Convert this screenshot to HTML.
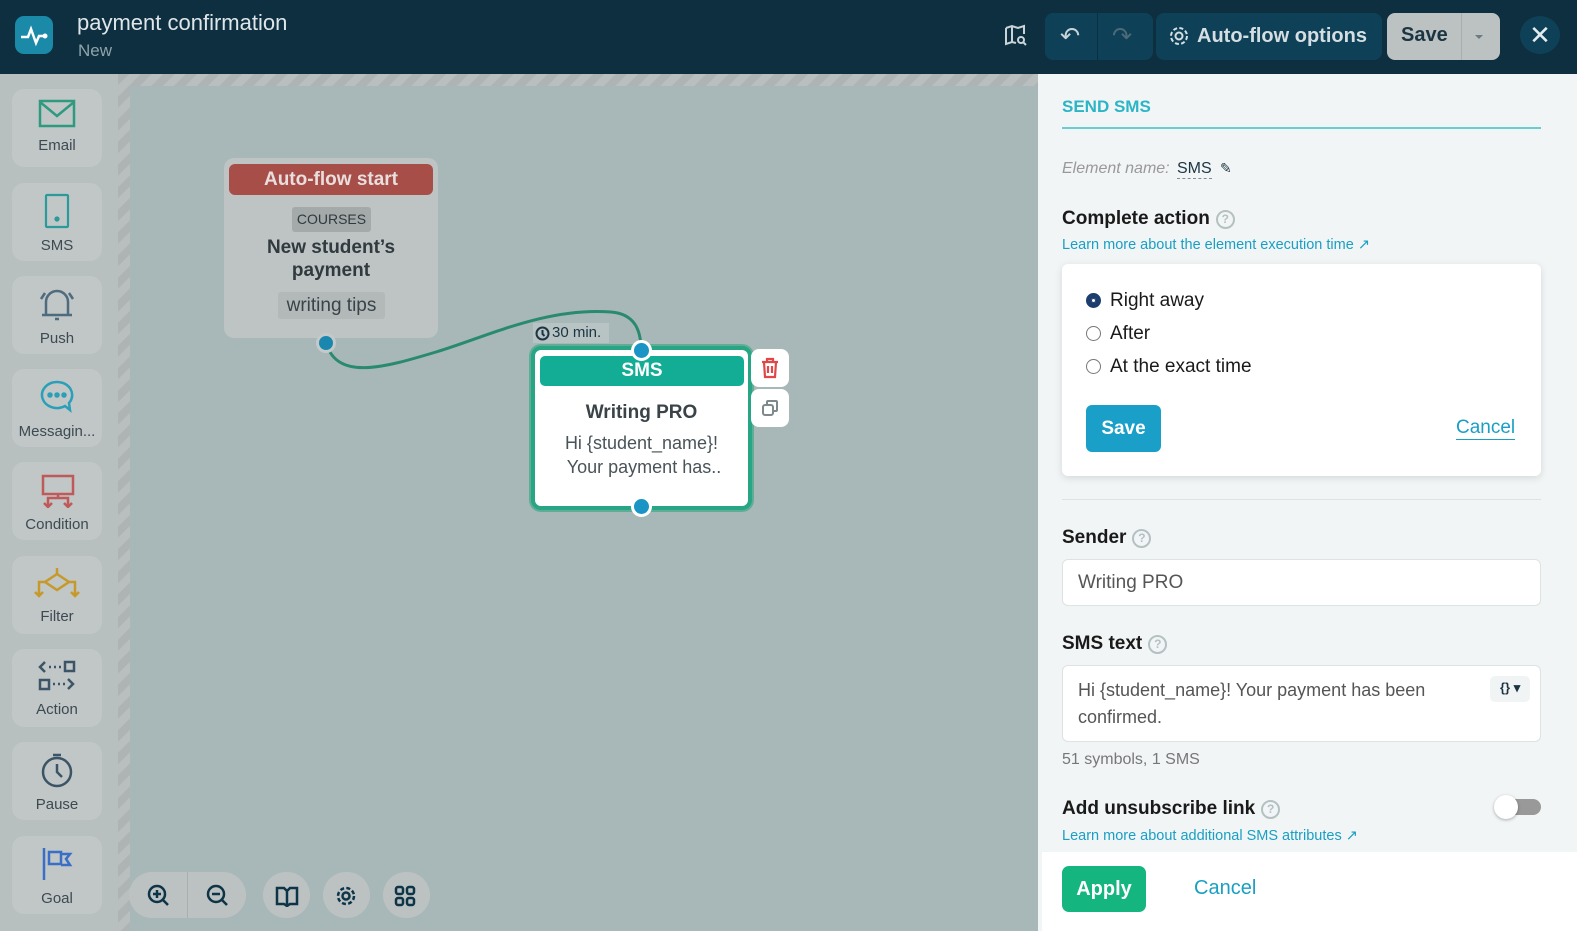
<!DOCTYPE html>
<html><head><meta charset="utf-8"><style>
*{box-sizing:border-box;margin:0;padding:0}
body{width:1577px;height:931px;overflow:hidden;font-family:"Liberation Sans",sans-serif;background:#a8b8b8;position:relative}
.a{position:absolute}
.hdr{left:0;top:0;width:1577px;height:74px;background:#0d2f40}
.side{left:0;top:74px;width:118px;height:857px;background:#b8bfbf}
.stripe{left:118px;top:74px;width:12px;height:857px;background:repeating-linear-gradient(135deg,#aeb4b4 0 8px,#b9bfbf 8px 16px)}
.stripe2{left:118px;top:74px;width:920px;height:12px;background:repeating-linear-gradient(135deg,#aeb4b4 0 8px,#b9bfbf 8px 16px)}
.tool{left:12px;width:90px;height:78px;background:#c1c6c6;border-radius:12px;text-align:center;font-size:15px;color:#3d4a52}
.tool svg{display:block;margin:10px auto 8px}
.cb{background:#bcc2c2;border-radius:24px;height:46px;top:872px}
.panel{left:1038px;top:74px;width:539px;height:857px;background:#f1f5f6}
.lbl{font-size:19px;font-weight:bold;color:#1a1a1a}
.q{display:inline-block;width:19px;height:19px;border:2px solid #b5c1c1;border-radius:50%;color:#b5c1c1;font-size:12px;text-align:center;line-height:15px;vertical-align:1px;margin-left:6px;font-weight:bold}
.lnk{font-size:14.5px;color:#1a9fc4}
.radio{width:15px;height:15px;border:1.5px solid #777;border-radius:50%;display:inline-block;vertical-align:-2px;margin-right:9px}
</style></head><body>
<div class="a hdr"></div>
<div class="a" style="left:15px;top:16px;width:38px;height:38px;border-radius:9px;background:#1a8aa8"><svg width="38" height="38"><path d="M6 21h7l3-8 5 14 3-7h5" stroke="#fff" stroke-width="2.5" fill="none"/><circle cx="30" cy="20" r="2.5" fill="#fff"/></svg></div>
<div class="a" style="left:77px;top:10px;font-size:22px;color:#dfe6ea">payment confirmation</div>
<div class="a" style="left:78px;top:41px;font-size:17px;color:#8fa3ac">New</div>
<svg class="a" style="left:1004px;top:24px" width="24" height="24" fill="none" stroke="#c9d3d8" stroke-width="2"><path d="M2 4l6-2 6 2 6-2v8M2 4v16l6-2 4 1M8 2v16"/><circle cx="17" cy="16" r="3"/><path d="M19 18l3 3"/></svg>
<div class="a" style="left:1045px;top:13px;width:108px;height:47px;background:#0e4157;border-radius:8px"></div>
<div class="a" style="left:1097px;top:13px;width:1px;height:47px;background:#0a2f40"></div>
<div class="a" style="left:1060px;top:22px;font-size:24px;color:#c9d3d8">↶</div>
<div class="a" style="left:1112px;top:22px;font-size:24px;color:#4c6a78">↷</div>
<div class="a" style="left:1156px;top:13px;width:226px;height:47px;background:#0e4157;border-radius:8px;color:#d5dee2;font-size:20px;font-weight:bold;line-height:47px;padding-left:41px">Auto-flow options</div>
<svg class="a" style="left:1168px;top:25px" width="22" height="22" fill="none" stroke="#d5dee2" stroke-width="2"><circle cx="11" cy="11" r="3.5"/><circle cx="11" cy="11" r="8" stroke-dasharray="4 2.3"/></svg>
<div class="a" style="left:1387px;top:13px;width:113px;height:47px;background:#bcc2c2;border-radius:8px"></div>
<div class="a" style="left:1401px;top:24px;font-size:20px;font-weight:bold;color:#1c3542">Save</div>
<div class="a" style="left:1461px;top:13px;width:1px;height:47px;background:#a8afaf"></div>
<div class="a" style="left:1475px;top:35px;border:4px solid transparent;border-top:4px solid #6d7a80"></div>
<div class="a" style="left:1520px;top:16px;width:40px;height:38px;border-radius:50%;background:#0e4157;color:#e5ecef;font-size:26px;text-align:center;line-height:38px">✕</div>

<div class="a side"></div><div class="a stripe"></div><div class="a stripe2"></div>
<div class="a tool" style="top:89px"><svg width="38" height="30" fill="none" stroke="#2e9a80" stroke-width="2.5"><rect x="2" y="2" width="34" height="25"/><path d="M2 3l17 14 17-14"/></svg>Email</div>
<div class="a tool" style="top:183px"><svg width="26" height="36" fill="none" stroke="#2a9a9a" stroke-width="2.2"><rect x="2" y="2" width="22" height="32" rx="1"/><circle cx="13" cy="26" r="1.5" fill="#2a9a9a"/></svg>SMS</div>
<div class="a tool" style="top:276px"><svg width="38" height="36" fill="none" stroke="#4f6b7e" stroke-width="2.5"><path d="M8 28V16a11 11 0 0 1 22 0v12M4 29h30M17 33h4M3 13l4-6M35 13l-4-6"/></svg>Push</div>
<div class="a tool" style="top:369px"><svg width="36" height="36" fill="none" stroke="#2aa0b8" stroke-width="2.5"><path d="M18 3a15 13 0 1 0 8 24l5 4-1-7A15 13 0 0 0 18 3z"/><circle cx="11" cy="16" r="1.5" fill="#2aa0b8"/><circle cx="18" cy="16" r="1.5" fill="#2aa0b8"/><circle cx="25" cy="16" r="1.5" fill="#2aa0b8"/></svg>Messagin...</div>
<div class="a tool" style="top:462px"><svg width="38" height="36" fill="none" stroke="#c05a5a" stroke-width="2.5"><rect x="5" y="4" width="30" height="18"/><path d="M20 22v4M10 34v-8h20v8M6 31l4 4 4-4M26 31l4 4 4-4"/></svg>Condition</div>
<div class="a tool" style="top:556px"><svg width="46" height="34" fill="none" stroke="#c59a2a" stroke-width="2.5"><path d="M23 2v6l-12 8 12 8 12-8-12-8M11 16H5v12M35 16h6v12M1 26l4 4 4-4M37 26l4 4 4-4"/></svg>Filter</div>
<div class="a tool" style="top:649px"><svg width="40" height="34" fill="none" stroke="#3c5566" stroke-width="2.5"><path d="M8 3l-5 5 5 5M12 8h2M17 8h2M22 8h2"/><rect x="28" y="3" width="9" height="9"/><rect x="3" y="21" width="9" height="9"/><path d="M16 25h2M21 25h2M26 25h2M31 20l5 5-5 5"/></svg>Action</div>
<div class="a tool" style="top:742px"><svg width="36" height="36" fill="none" stroke="#3c5566" stroke-width="2.5"><circle cx="18" cy="20" r="14"/><path d="M14 3h8M18 12v8l5 5"/></svg>Pause</div>
<div class="a tool" style="top:836px"><svg width="34" height="36" fill="none" stroke="#3a6fc8" stroke-width="2.5"><path d="M4 2v32M9 6h12v12H9zM21 8h9l-4 5 4 6h-9"/></svg>Goal</div>

<div class="a cb" style="left:129px;width:117px"></div>
<div class="a" style="left:187px;top:872px;width:1px;height:46px;background:#aab0b0"></div>
<div class="a cb" style="left:263px;width:47px"></div>
<div class="a cb" style="left:323px;width:47px"></div>
<div class="a cb" style="left:383px;width:47px"></div>
<svg class="a" style="left:147px;top:884px" width="24" height="24" fill="none" stroke="#0e3447" stroke-width="2.5"><circle cx="10" cy="10" r="8"/><path d="M16 16l5 5M6 10h8M10 6v8"/></svg>
<svg class="a" style="left:206px;top:884px" width="24" height="24" fill="none" stroke="#0e3447" stroke-width="2.5"><circle cx="10" cy="10" r="8"/><path d="M16 16l5 5M6 10h8"/></svg>
<svg class="a" style="left:275px;top:885px" width="24" height="22" fill="none" stroke="#0e3447" stroke-width="2.5"><path d="M2 3h7l3 3 3-3h7v16h-7l-3 2-3-2H2zM12 6v15"/></svg>
<svg class="a" style="left:335px;top:885px" width="22" height="22" fill="none" stroke="#0e3447" stroke-width="2.5"><circle cx="11" cy="11" r="3.5"/><circle cx="11" cy="11" r="8" stroke-dasharray="4 2.3"/></svg>
<svg class="a" style="left:394px;top:885px" width="22" height="22" fill="none" stroke="#0e3447" stroke-width="2.5"><rect x="2" y="2" width="7" height="7" rx="2"/><rect x="13" y="2" width="7" height="7" rx="2"/><rect x="2" y="13" width="7" height="7" rx="2"/><rect x="13" y="13" width="7" height="7" rx="2"/></svg>

<svg class="a" style="left:0;top:0" width="1040" height="931" fill="none"><path d="M326 342c10 40 60 25 110 10s110-45 175-40c25 2 30 20 30 38" stroke="#2a8a70" stroke-width="3"/></svg>
<div class="a" style="left:224px;top:158px;width:214px;height:180px;background:#bec3c3;border-radius:10px"></div>
<div class="a" style="left:229px;top:164px;width:204px;height:31px;background:#a84e48;border-radius:6px;color:#e8dede;font-size:19px;font-weight:bold;text-align:center;line-height:31px">Auto-flow start</div>
<div class="a" style="left:292px;top:207px;width:79px;height:25px;background:#a4aaaa;border-radius:3px;color:#2f3a3f;font-size:14px;text-align:center;line-height:25px">COURSES</div>
<div class="a" style="left:224px;top:236px;width:214px;text-align:center;font-size:19px;font-weight:bold;color:#303a3f;line-height:23px">New student’s<br>payment</div>
<div class="a" style="left:278px;top:292px;width:107px;height:27px;background:#b3b9b9;border-radius:3px;color:#3a4448;font-size:19px;text-align:center;line-height:27px">writing tips</div>
<div class="a" style="left:316px;top:333px;width:20px;height:20px;border-radius:50%;background:#1a88ae;border:3px solid #c4c9c9"></div>

<div class="a" style="left:533px;top:323px;width:76px;height:20px;background:#b8c4c4;font-size:15px;color:#1c3542;line-height:20px;padding-left:19px">30 min.</div>
<svg class="a" style="left:535px;top:326px" width="15" height="15" fill="none" stroke="#1c3542" stroke-width="2"><circle cx="7.5" cy="7.5" r="6"/><path d="M7.5 4v4l2 2"/></svg>
<div class="a" style="left:531px;top:346px;width:221px;height:164px;border:4px solid #27a584;border-radius:10px;background:#fff;box-shadow:0 0 0 2px #5eae96"></div>
<div class="a" style="left:540px;top:356px;width:204px;height:30px;background:#13ac94;border-radius:5px;color:#fff;font-size:19px;font-weight:bold;text-align:center;line-height:30px">SMS</div>
<div class="a" style="left:535px;top:402px;width:213px;text-align:center;font-size:19px;font-weight:bold;color:#3a4448">Writing PRO</div>
<div class="a" style="left:535px;top:431px;width:213px;text-align:center;font-size:18px;color:#4a5458;line-height:24px">Hi {student_name}!<br>&nbsp;Your payment has..</div>
<div class="a" style="left:631px;top:340px;width:21px;height:21px;border-radius:50%;background:#1a94c4;border:3px solid #fff"></div>
<div class="a" style="left:631px;top:496px;width:21px;height:21px;border-radius:50%;background:#1a94c4;border:3px solid #fff"></div>
<div class="a" style="left:751px;top:349px;width:38px;height:38px;background:#fff;border-radius:8px"></div>
<svg class="a" style="left:760px;top:357px" width="20" height="22" fill="none" stroke="#e04848" stroke-width="2.2"><path d="M2 5h16M7 5V2h6v3M4 5l1 15h10l1-15M8 9v7M12 9v7"/></svg>
<div class="a" style="left:751px;top:389px;width:38px;height:38px;background:#fff;border-radius:8px"></div>
<svg class="a" style="left:761px;top:399px" width="18" height="18" fill="none" stroke="#7d898d" stroke-width="2"><rect x="2" y="6" width="10" height="10" rx="2"/><path d="M6 6V3a1 1 0 0 1 1-1h8a1 1 0 0 1 1 1v8a1 1 0 0 1-1 1h-3"/></svg>

<div class="a panel"></div>
<div class="a" style="left:1062px;top:97px;font-size:17px;font-weight:bold;color:#2bb5c5">SEND SMS</div>
<div class="a" style="left:1062px;top:127px;width:479px;height:2px;background:#6cccd4"></div>
<div class="a" style="left:1062px;top:160px;font-size:16px;color:#999;font-style:italic">Element name:</div>
<div class="a" style="left:1177px;top:160px;font-size:16px;color:#1c3542;border-bottom:1px dashed #889">SMS</div>
<div class="a" style="left:1220px;top:160px;font-size:14px;color:#1c3542">✎</div>
<div class="a lbl" style="left:1062px;top:208px">Complete action<span class="q">?</span></div>
<div class="a lnk" style="left:1062px;top:237px">Learn more about the element execution time ↗</div>
<div class="a" style="left:1062px;top:264px;width:479px;height:212px;background:#fff;border-radius:6px;box-shadow:0 2px 8px rgba(0,0,0,.12)"></div>
<div class="a" style="left:1086px;top:290px;font-size:19px;color:#1a1a1a"><span class="radio" style="border:5px solid #1c3d6e;background:#fff;box-shadow:inset 0 0 0 1px #1c3d6e"></span>Right away</div>
<div class="a" style="left:1086px;top:323px;font-size:19px;color:#1a1a1a"><span class="radio"></span>After</div>
<div class="a" style="left:1086px;top:356px;font-size:19px;color:#1a1a1a"><span class="radio"></span>At the exact time</div>
<div class="a" style="left:1086px;top:405px;width:75px;height:47px;background:#1a9fc8;border-radius:6px;color:#fff;font-size:19px;font-weight:bold;text-align:center;line-height:47px">Save</div>
<div class="a" style="left:1456px;top:417px;font-size:19px;color:#1a9fc4;border-bottom:1px solid #1a9fc4">Cancel</div>
<div class="a" style="left:1062px;top:499px;width:479px;height:1px;background:#dde3e4"></div>
<div class="a lbl" style="left:1062px;top:527px">Sender<span class="q">?</span></div>
<div class="a" style="left:1062px;top:559px;width:479px;height:47px;background:#fff;border:1px solid #dde2e3;border-radius:6px;font-size:19px;color:#555;line-height:45px;padding-left:15px">Writing PRO</div>
<div class="a lbl" style="left:1062px;top:633px">SMS text<span class="q">?</span></div>
<div class="a" style="left:1062px;top:665px;width:479px;height:77px;background:#fff;border:1px solid #dde2e3;border-radius:6px;font-size:18px;color:#555;line-height:27px;padding:11px 60px 0 15px">Hi {student_name}! Your payment has been confirmed.</div>
<div class="a" style="left:1490px;top:676px;width:40px;height:26px;background:#f1f4f5;border-radius:5px;font-size:13px;font-weight:bold;color:#1c3542;line-height:24px;padding-left:10px">{} ▾</div>
<div class="a" style="left:1062px;top:751px;font-size:16px;color:#777">51 symbols, 1 SMS</div>
<div class="a lbl" style="left:1062px;top:798px">Add unsubscribe link<span class="q">?</span></div>
<div class="a" style="left:1496px;top:799px;width:45px;height:16px;background:#999;border-radius:8px"></div>
<div class="a" style="left:1494px;top:795px;width:24px;height:24px;background:#fff;border-radius:50%;box-shadow:0 1px 3px rgba(0,0,0,.3)"></div>
<div class="a lnk" style="left:1062px;top:828px">Learn more about additional SMS attributes ↗</div>
<div class="a" style="left:1042px;top:852px;width:535px;height:79px;background:#fff"></div>
<div class="a" style="left:1062px;top:866px;width:84px;height:46px;background:#14b57e;border-radius:7px;color:#fff;font-size:20px;font-weight:bold;text-align:center;line-height:46px">Apply</div>
<div class="a" style="left:1194px;top:877px;font-size:20px;color:#1a9fc4">Cancel</div>
</body></html>
